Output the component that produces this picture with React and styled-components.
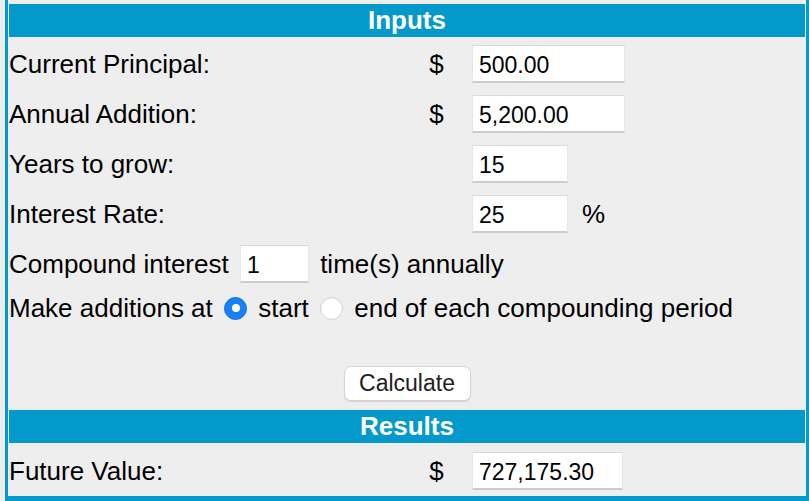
import React from "react";
import styled, { createGlobalStyle } from "styled-components";

const BLUE = "#0399cb";

const GlobalStyle = createGlobalStyle`
  html, body { margin: 0; padding: 0; }
  body {
    background: #eeeeee;
    font-family: "Liberation Sans", Arial, Helvetica, sans-serif;
    color: #000;
  }
  * { box-sizing: border-box; }
`;

const Frame = styled.div`
  width: 804px;
  margin-left: 5px;
  background: #eeeeee;
  border-left: 3px solid ${BLUE};
  border-right: 3px solid ${BLUE};
  border-bottom: 5px solid ${BLUE};
  padding: 4px 1px 3px 1px;
  display: flex;
  flex-direction: column;
  font-size: 26px;
`;

const Header = styled.div`
  height: 33px;
  line-height: 33px;
  margin-top: ${(p) => p.$mt || 0}px;
  background: ${BLUE};
  color: #fff;
  font-weight: bold;
  text-align: center;
  font-size: 26px;
`;

const Row = styled.div`
  display: grid;
  grid-template-columns: 402px 51px auto;
  align-items: center;
  height: 38px;
  margin-top: ${(p) => p.$mt ?? 8}px;
  margin-bottom: ${(p) => p.$mb ?? 4}px;
`;

const Label = styled.div`
  white-space: nowrap;
`;

const Dollar = styled.div`
  text-align: center;
`;

const Field = styled.div`
  display: flex;
  align-items: center;
  padding-left: 10px;
`;

const TextInput = styled.input`
  width: ${(p) => p.$w}px;
  height: 38px;
  margin: ${(p) => (p.$inline ? "0 4px" : "0")};
  padding: 4px 0 0 6px;
  background: #fff;
  border: 1px solid #e6e6e6;
  border-top-color: #d9d9d9;
  border-bottom: 2px solid #cccccc;
  border-radius: 0;
  font-family: "Liberation Sans", Arial, Helvetica, sans-serif;
  font-size: 23px;
  color: #000;
  outline: none;
  vertical-align: middle;
`;

const Suffix = styled.span`
  margin-left: 14px;
`;

const LineRow = styled.div`
  display: flex;
  align-items: center;
  white-space: pre;
  height: ${(p) => p.$h}px;
  padding-top: ${(p) => p.$pt || 0}px;
`;

const Radio = styled.span`
  display: inline-block;
  width: 23px;
  height: 23px;
  margin: 0 4px;
  border-radius: 50%;
  position: relative;
  background: ${(p) => (p.$checked ? "#1a7ef5" : "#ffffff")};
  border: 1px solid ${(p) => (p.$checked ? "#1674e6" : "#d2d2d2")};
  box-shadow: ${(p) =>
    p.$checked ? "none" : "inset 0 1px 1px rgba(0,0,0,0.06)"};
  &::after {
    content: "";
    display: ${(p) => (p.$checked ? "block" : "none")};
    position: absolute;
    left: 50%;
    top: 50%;
    width: 8px;
    height: 8px;
    margin: -4px 0 0 -4px;
    border-radius: 50%;
    background: #fff;
  }
`;

const ButtonRow = styled.div`
  display: flex;
  justify-content: center;
  padding-top: 37px;
  padding-bottom: 7px;
`;

const Button = styled.button`
  width: 127px;
  height: 35px;
  background: #fff;
  border: 1px solid #d4d4d4;
  border-radius: 7px;
  box-shadow: 0 1px 1px rgba(0, 0, 0, 0.12);
  font-family: "Liberation Sans", Arial, Helvetica, sans-serif;
  font-size: 23px;
  color: #1e1e1e;
  padding: 0;
`;

export default function App() {
  return (
    <>
      <GlobalStyle />
      <Frame>
        <Header>Inputs</Header>
        <Row>
          <Label>Current Principal:</Label>
          <Dollar>$</Dollar>
          <Field>
            <TextInput $w={153} defaultValue="500.00" />
          </Field>
        </Row>
        <Row>
          <Label>Annual Addition:</Label>
          <Dollar>$</Dollar>
          <Field>
            <TextInput $w={153} defaultValue="5,200.00" />
          </Field>
        </Row>
        <Row>
          <Label>Years to grow:</Label>
          <Dollar />
          <Field>
            <TextInput $w={96} defaultValue="15" />
          </Field>
        </Row>
        <Row>
          <Label>Interest Rate:</Label>
          <Dollar />
          <Field>
            <TextInput $w={96} defaultValue="25" />
            <Suffix>%</Suffix>
          </Field>
        </Row>
        <Row as="div" $mb={4}>
          <LineRow>
            {"Compound interest "}
            <TextInput $w={69} $inline defaultValue="1" />
            {" time(s) annually"}
          </LineRow>
        </Row>
        <LineRow $h={42}>
          {"Make additions at "}
          <Radio $checked />
          {" start "}
          <Radio />
          {" end of each compounding period"}
        </LineRow>
        <ButtonRow>
          <Button type="button">Calculate</Button>
        </ButtonRow>
        <Header $mt={2}>Results</Header>
        <Row $mt={9} $mb={3}>
          <Label>Future Value:</Label>
          <Dollar>$</Dollar>
          <Field>
            <TextInput $w={151} defaultValue="727,175.30" />
          </Field>
        </Row>
      </Frame>
    </>
  );
}
